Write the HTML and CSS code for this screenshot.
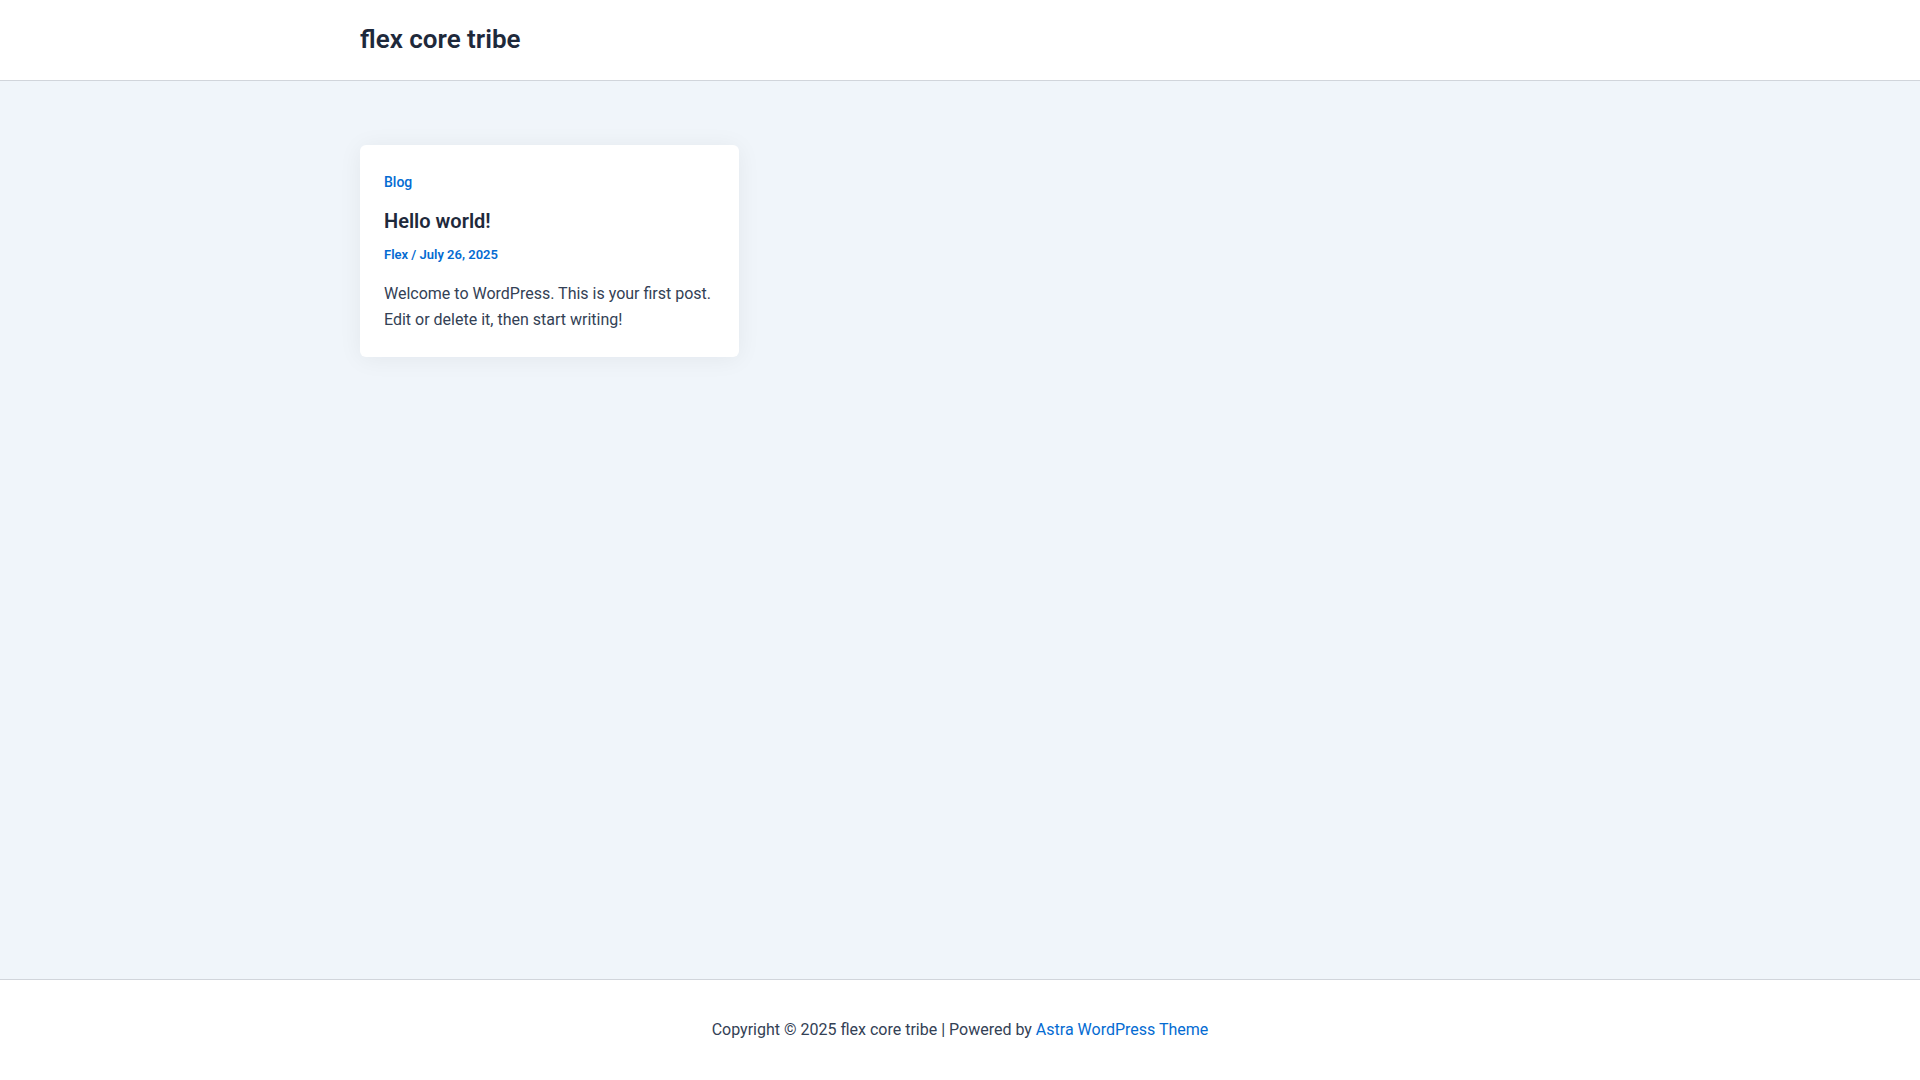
FILE: index.html
```html
<!DOCTYPE html>
<html lang="en">
<head>
<meta charset="utf-8">
<title>flex core tribe</title>
<link rel="stylesheet" href="styles.css">
</head>
<body>
<div class="page">
  <header class="site-header">
    <div class="container header-inner">
      <a class="site-title" href="#">flex core tribe</a>
    </div>
  </header>
  <main class="site-main">
    <div class="container">
      <div class="post-grid">
        <article class="post-card">
          <a class="post-cat" href="#">Blog</a>
          <h2 class="post-title"><a href="#">Hello world!</a></h2>
          <div class="post-meta"><a href="#">Flex</a> / <span>July 26, 2025</span></div>
          <p class="post-excerpt">Welcome to WordPress. This is your first post. Edit or delete it, then start writing!</p>
        </article>
      </div>
    </div>
  </main>
  <footer class="site-footer">
    <div class="container footer-inner">
      Copyright © 2025 flex core tribe | Powered by <a href="#">Astra WordPress Theme</a>
    </div>
  </footer>
</div>
</body>
</html>
```
FILE: styles.css
```css
* { box-sizing: border-box; }
html, body { margin: 0; padding: 0; }
body {
  font-family: Roboto, "Liberation Sans", Arial, sans-serif;
  color: #334155;
  background: #f0f5fa;
  font-size: 16px;
  line-height: 1.65;
}
a { color: #046bd2; text-decoration: none; }
.page {
  min-height: 100vh;
  display: flex;
  flex-direction: column;
}
.container {
  width: 1200px;
  margin: 0 auto;
}
.site-header {
  background: #ffffff;
  border-bottom: 1px solid #d1d5db;
}
.header-inner {
  height: 80px;
  display: flex;
  align-items: center;
}
.site-title {
  font-size: 26px;
  font-weight: 600;
  line-height: 1.2;
  color: #1e293b;
}
.site-main {
  flex: 1;
  padding-top: 64px;
}
.post-grid {
  display: grid;
  grid-template-columns: repeat(3, 1fr);
  gap: 32px;
}
.post-card {
  background: #ffffff;
  border-radius: 6px;
  padding: 27px 24px 23px;
  box-shadow: 0 2px 24px rgba(15, 23, 42, 0.06);
}
.post-cat {
  display: block;
  font-size: 14px;
  font-weight: 500;
  line-height: 20px;
}
.post-title {
  margin: 16px 0 0;
  font-size: 20px;
  font-weight: 600;
  line-height: 26px;
}
.post-title a { color: #1e293b; }
.post-meta {
  margin-top: 10.5px;
  font-size: 13px;
  font-weight: 600;
  line-height: 20px;
  color: #046bd2;
}
.post-excerpt {
  margin: 16.4px 0 0;
  font-size: 16px;
  line-height: 26.4px;
  color: #334155;
}
.site-footer {
  background: #ffffff;
  border-top: 1px solid #d1d5db;
  padding: 37px 0 37px;
}
.footer-inner {
  text-align: center;
  font-size: 16px;
  line-height: 26.4px;
  color: #334155;
}
```
